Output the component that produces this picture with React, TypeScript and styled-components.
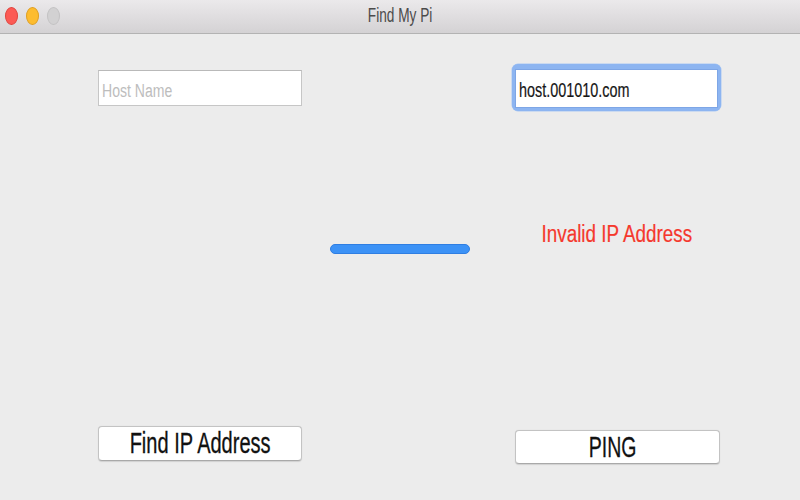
import React from "react";
import styled, { createGlobalStyle } from "styled-components";

const Global = createGlobalStyle`
  html, body { margin: 0; padding: 0; background: #ececec; }
  body { width: 800px; height: 500px; overflow: hidden; font-family: "Liberation Sans", Arial, sans-serif; }
  * { box-sizing: border-box; }
`;

const Window = styled.div`
  width: 800px;
  height: 500px;
  display: flex;
  flex-direction: column;
  background: #ececec;
`;

const TitleBar = styled.div`
  height: 34px;
  flex: none;
  display: grid;
  grid-template-columns: 1fr auto 1fr;
  align-items: start;
  background: linear-gradient(#ebe9eb, #d4d2d4);
  border-bottom: 1px solid #b3b3b3;
`;

const Lights = styled.div`
  display: flex;
  gap: 8px;
  padding: 7px 0 0 5px;
`;

const Light = styled.div<{ $fill: string; $edge: string }>`
  width: 13px;
  height: 18px;
  border-radius: 50%;
  background: ${(p) => p.$fill};
  border: 1px solid ${(p) => p.$edge};
`;

const Squeeze = styled.span<{ $size: number; $scale: number; $origin?: string; $color?: string; $stroke?: number }>`
  display: inline-block;
  font-size: ${(p) => p.$size}px;
  line-height: ${(p) => p.$size}px;
  color: ${(p) => p.$color ?? "#111"};
  transform: scaleX(${(p) => p.$scale});
  transform-origin: ${(p) => p.$origin ?? "center"};
  white-space: nowrap;
  -webkit-text-stroke: ${(p) => p.$stroke ?? 0}px ${(p) => p.$color ?? "#111"};
`;

const Title = styled.div`
  padding-top: 6px;
  text-align: center;
`;

const Content = styled.div`
  flex: 1;
  display: grid;
  grid-template-columns: 98px 204px 28px 140px 42px 210px 1fr;
  grid-template-rows: 47px 315px 40px 1fr;
  padding-top: 30px;
`;

const TextField = styled.div`
  grid-column: 2;
  grid-row: 1;
  margin-top: 6px;
  height: 36px;
  background: #fff;
  border: 1px solid #c6c6c6;
  border-top-color: #b9b9b9;
  padding: 11px 0 0 3px;
  overflow: hidden;
`;

const FocusRing = styled.div`
  grid-column: 6;
  grid-row: 1;
  height: 47px;
  width: 209px;
  padding: 5px 3px 3px 3px;
  border-radius: 6px;
  background: #8db5f1;
  box-shadow: 0 0 0 0.5px #a9c7f3;
`;

const FocusedField = styled.div`
  height: 100%;
  background: #fff;
  border: 1px solid #7ea6e6;
  padding: 10px 0 0 3px;
  overflow: hidden;
`;

const Progress = styled.div`
  grid-column: 4;
  grid-row: 2;
  margin-top: 133px;
  height: 10px;
  border-radius: 5px;
  background: #3c92f6;
  border: 1px solid #2f7ee2;
`;

const Status = styled.div`
  grid-column: 6;
  grid-row: 2;
  margin-top: 112px;
  text-align: center;
`;

const Button = styled.button<{ $col: number; $offset: number; $width: number; $height: number; $nudge?: number }>`
  grid-column: ${(p) => p.$col};
  grid-row: 3;
  margin-top: ${(p) => p.$offset}px;
  margin-left: ${(p) => (p.$col === 6 ? 3 : 0)}px;
  width: ${(p) => p.$width}px;
  height: ${(p) => p.$height}px;
  padding: 0 ${(p) => p.$nudge ?? 0}px 0 0;
  display: flex;
  align-items: center;
  justify-content: center;
  background: #fff;
  border: 1px solid #c3c3c3;
  border-bottom-color: #a9a9a9;
  border-radius: 4px;
  box-shadow: 0 0.5px 1px rgba(0, 0, 0, 0.12);
  font-family: "Liberation Sans", Arial, sans-serif;
  cursor: default;
`;

export default function App() {
  return (
    <>
      <Global />
      <Window>
        <TitleBar>
          <Lights>
            <Light $fill="#fc5a55" $edge="#e0443e" />
            <Light $fill="#fdbc2f" $edge="#df9f22" />
            <Light $fill="#d2d1d2" $edge="#c3c2c3" />
          </Lights>
          <Title>
            <Squeeze $size={19.5} $scale={0.7} $color="#4b4b4b">
              Find My Pi
            </Squeeze>
          </Title>
          <div />
        </TitleBar>
        <Content>
          <TextField>
            <Squeeze $size={18} $scale={0.78} $origin="left" $color="#bdbdbd">
              Host Name
            </Squeeze>
          </TextField>
          <FocusRing>
            <FocusedField>
              <Squeeze $size={20} $scale={0.72} $origin="left" $color="#161616" $stroke={0.2}>
                host.001010.com
              </Squeeze>
            </FocusedField>
          </FocusRing>
          <Progress />
          <Status>
            <Squeeze $size={23} $scale={0.82} $color="#f5382d" $stroke={0.2}>
              Invalid IP Address
            </Squeeze>
          </Status>
          <Button $col={2} $offset={0} $width={204} $height={35}>
            <Squeeze $size={29} $scale={0.69} $color="#111" $stroke={0.3}>
              Find IP Address
            </Squeeze>
          </Button>
          <Button $col={6} $offset={4} $width={205} $height={34} $nudge={10}>
            <Squeeze $size={30} $scale={0.65} $color="#111" $stroke={0.3}>
              PING
            </Squeeze>
          </Button>
        </Content>
      </Window>
    </>
  );
}
